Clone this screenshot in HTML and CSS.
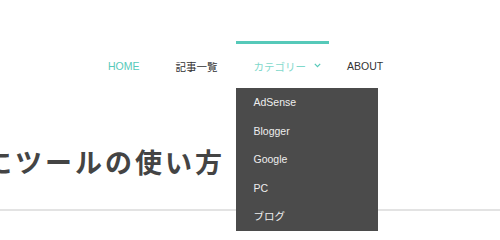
FILE: index.html
```html
<!DOCTYPE html>
<html lang="ja">
<head>
  <meta charset="UTF-8" />
  <title>ツールの使い方</title>
  <link rel="stylesheet" href="styles.css">
</head>
<body>
  <header>
    <nav class="global-nav">
      <a href="#" class="nav-item current">HOME</a>
      <a href="#" class="nav-item">記事一覧</a>
      <div class="nav-item has-sub open">
        <span>カテゴリー</span>
        <svg class="chevron" width="7" height="5" viewBox="0 0 7 5"><path d="M0.8 0.8 L3.5 3.6 L6.2 0.8" fill="none" stroke="#56c9b9" stroke-width="1.2"/></svg>
        <ul class="sub-menu">
          <li><a href="#">AdSense</a></li>
          <li><a href="#">Blogger</a></li>
          <li><a href="#">Google</a></li>
          <li><a href="#">PC</a></li>
          <li><a href="#">ブログ</a></li>
        </ul>
      </div>
      <a href="#" class="nav-item">ABOUT</a>
    </nav>
  </header>

  <main>
    <div class="title-row">
      <h1>初心者向けにツールの使い方</h1>
    </div>
  </main>
</body>
</html>
```

FILE: styles.css
```css
* {
  margin: 0;
  padding: 0;
  box-sizing: border-box;
}

html, body {
  height: 240px;
}

body {
  background: white;
  color: #333;
  font-family: 'Liberation Sans', 'Noto Sans CJK JP', sans-serif;
  overflow: hidden;
}

a {
  text-decoration: none;
  color: #333;
}

header {
  padding-top: 41px;
  position: relative;
  z-index: 2;
}

.global-nav {
  display: flex;
  padding-left: 90px;
  font-size: 10.5px;
}

.nav-item {
  display: flex;
  align-items: center;
  height: 47px;
  padding: 0 18px;
  border-top: 3px solid transparent;
  color: #333;
  white-space: nowrap;
}

.nav-item.current {
  color: #56c9b9;
}

.has-sub {
  position: relative;
  padding-right: 8px;
}

.has-sub.open {
  border-top-color: #56c9b9;
  color: #7fd8cb;
}

.chevron {
  margin-left: 8px;
  margin-top: -2px;
}

.sub-menu {
  position: absolute;
  left: 0;
  top: 44px;
  width: 142px;
  background: #4b4b4b;
  list-style: none;
}

.sub-menu li a {
  display: block;
  padding-left: 18px;
  line-height: 28.5px;
  color: #eee;
  font-size: 10.5px;
}

main {
  margin-top: 58px;
  padding-bottom: 27px;
  border-bottom: 2px solid #e3e3e3;
}

.title-row {
  display: flex;
  justify-content: flex-end;
  width: 225px;
}

h1 {
  white-space: nowrap;
  font-size: 27px;
  line-height: 36px;
  letter-spacing: 3px;
  font-weight: 700;
  color: #444;
}
```
